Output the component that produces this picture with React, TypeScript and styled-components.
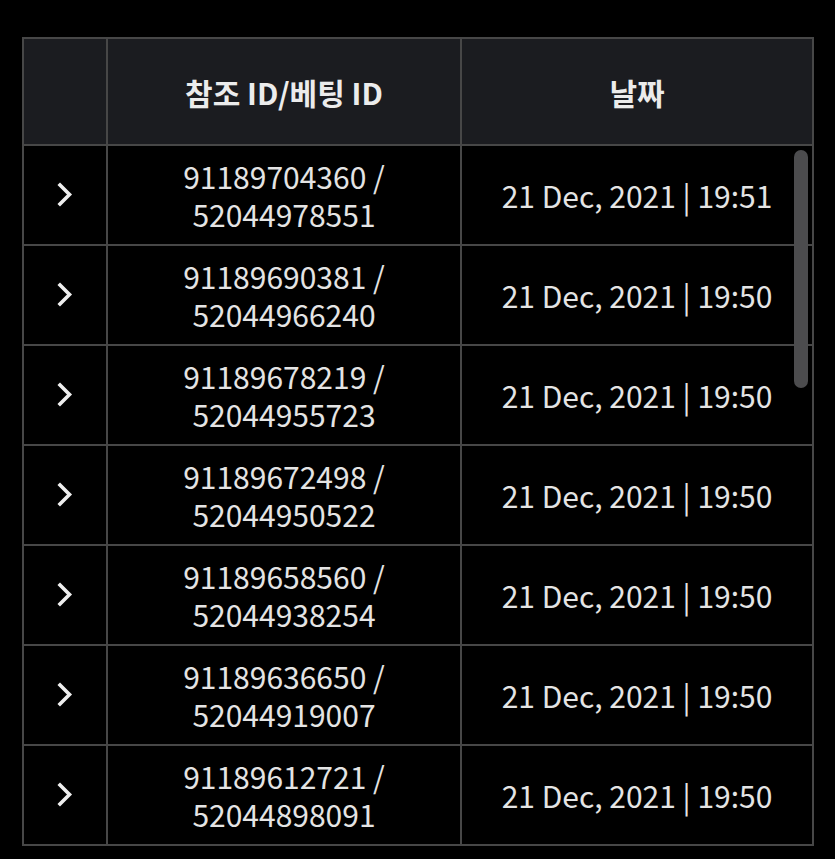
import React from "react";
import styled, { createGlobalStyle } from "styled-components";

const GlobalStyle = createGlobalStyle`
  html, body {
    margin: 0;
    padding: 0;
    background: #000;
  }
  body {
    font-family: "Noto Sans CJK KR", "Noto Sans", sans-serif;
    color: #e4e4e4;
  }
`;

const Page = styled.div`
  padding: 37px 0 0 22px;
  height: 822px;
  overflow: hidden;
`;

const TableWrap = styled.div`
  position: relative;
  width: 790px;
`;

const Table = styled.table`
  width: 790px;
  border-collapse: collapse;
  table-layout: fixed;
`;

const HeadCell = styled.th<{ w: number }>`
  width: ${(p) => p.w}px;
  height: 105px;
  padding: 0;
  background: #1b1c20;
  border: 2px solid #474747;
  color: #ececec;
  font-size: 30px;
  font-weight: 700;
  text-align: center;
  vertical-align: middle;
`;

const Cell = styled.td`
  height: 98px;
  padding: 0;
  border: 2px solid #474747;
  font-size: 30px;
  font-weight: 400;
  line-height: 38px;
  text-align: center;
  vertical-align: middle;
  color: #e4e4e4;
  white-space: nowrap;
`;

const Line = styled.div`
  height: 38px;
`;

const Chevron = styled.svg`
  display: block;
  margin: 0 auto;
`;

const Scrollbar = styled.div`
  position: absolute;
  top: 113px;
  right: 4px;
  width: 14px;
  height: 238px;
  border-radius: 7px;
  background: #4c4c4e;
`;

const rows = [
  ["91189704360", "52044978551", "19:51"],
  ["91189690381", "52044966240", "19:50"],
  ["91189678219", "52044955723", "19:50"],
  ["91189672498", "52044950522", "19:50"],
  ["91189658560", "52044938254", "19:50"],
  ["91189636650", "52044919007", "19:50"],
  ["91189612721", "52044898091", "19:50"],
];

const Arrow = () => (
  <Chevron width="24" height="30" viewBox="0 0 24 30">
    <polyline
      points="7,5 16.5,14.5 7,24"
      fill="none"
      stroke="#eeeeee"
      strokeWidth="3.6"
      strokeLinecap="square"
    />
  </Chevron>
);

export default function App() {
  return (
    <Page>
      <GlobalStyle />
      <TableWrap>
        <Table>
          <thead>
            <tr>
              <HeadCell w={82} />
              <HeadCell w={352}>참조 ID/베팅 ID</HeadCell>
              <HeadCell w={350}>날짜</HeadCell>
            </tr>
          </thead>
          <tbody>
            {rows.map(([ref, bet, time]) => (
              <tr key={ref}>
                <Cell>
                  <Arrow />
                </Cell>
                <Cell>
                  <Line>{ref} /</Line>
                  <Line>{bet}</Line>
                </Cell>
                <Cell>21 Dec, 2021 | {time}</Cell>
              </tr>
            ))}
          </tbody>
        </Table>
        <Scrollbar />
      </TableWrap>
    </Page>
  );
}
